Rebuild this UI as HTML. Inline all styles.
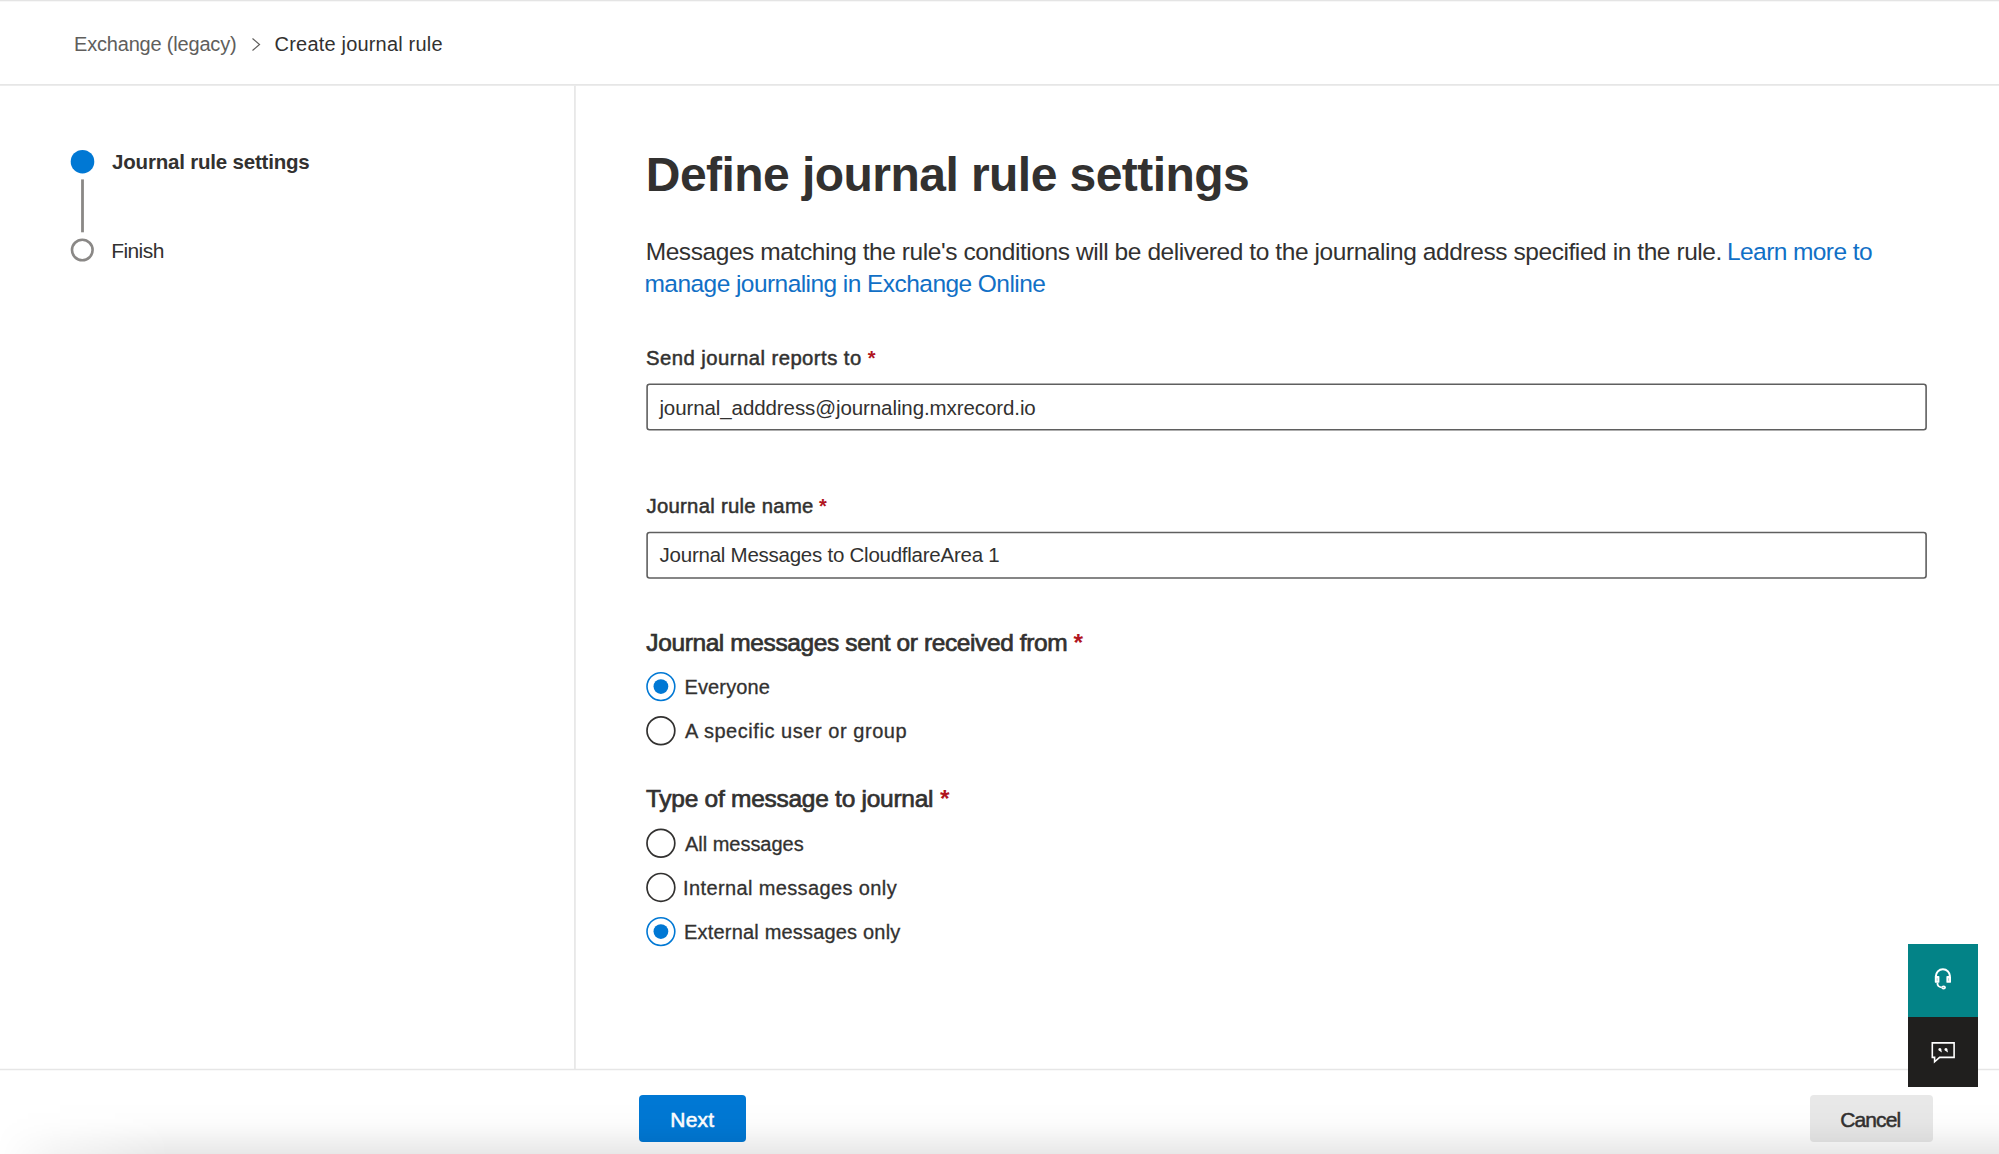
<!DOCTYPE html>
<html><head><meta charset="utf-8"><title>Create journal rule</title><style>
html,body{margin:0;padding:0;width:1999px;height:1154px;overflow:hidden;background:#fff;position:relative;font-family:"Liberation Sans",sans-serif}
.t{position:absolute;white-space:pre;line-height:1}
</style></head><body>
<svg style="position:absolute;left:0;top:0" width="1999" height="1154" viewBox="0 0 1999 1154">
<rect x="0" y="0" width="1999" height="1.3" fill="#e4e4e4"/>
<line x1="0" y1="84.8" x2="1999" y2="84.8" stroke="#e6e6e6" stroke-width="1.7"/>
<line x1="574.9" y1="85.6" x2="574.9" y2="1069" stroke="#e8e8e8" stroke-width="1.8"/>
<line x1="0" y1="1069.5" x2="1999" y2="1069.5" stroke="#e6e6e6" stroke-width="1.6"/>
<circle cx="82.5" cy="161.7" r="11.8" fill="#0078d4"/>
<rect x="81.1" y="179.4" width="2.8" height="52.9" fill="#8a8886"/>
<circle cx="82.3" cy="250" r="10.3" fill="none" stroke="#8a8886" stroke-width="2.6"/>
</svg>
<svg style="position:absolute;left:0;top:0" width="1999" height="1154" viewBox="0 0 1999 1154">
<rect x="647.1" y="384.3" width="1279" height="45.5" rx="2.5" fill="none" stroke="#5f5f5f" stroke-width="1.6"/>
<rect x="647.1" y="532.5" width="1279" height="45.5" rx="2.5" fill="none" stroke="#5f5f5f" stroke-width="1.6"/>
<circle cx="660.9" cy="686.6" r="13.9" fill="none" stroke="#0078d4" stroke-width="1.6"/><circle cx="660.9" cy="686.6" r="7.4" fill="#0078d4"/><circle cx="660.9" cy="730.8" r="13.9" fill="none" stroke="#323130" stroke-width="1.7"/><circle cx="660.9" cy="843.2" r="13.9" fill="none" stroke="#323130" stroke-width="1.7"/><circle cx="660.9" cy="887.4" r="13.9" fill="none" stroke="#323130" stroke-width="1.7"/><circle cx="660.9" cy="931.6" r="13.9" fill="none" stroke="#0078d4" stroke-width="1.6"/><circle cx="660.9" cy="931.6" r="7.4" fill="#0078d4"/>
<path d="M252.5 38.5 L259.5 44.5 L252.5 50.5" fill="none" stroke="#605e5c" stroke-width="1.2"/>
</svg>
<div style="position:absolute;left:638.7px;top:1095.2px;width:107px;height:46.6px;border-radius:4px;background:#0078d4"></div>
<div style="position:absolute;left:1809.6px;top:1095px;width:123px;height:46.8px;border-radius:4px;background:#e8e8e8"></div>
<div style="position:absolute;left:1907.6px;top:943.6px;width:70.8px;height:73.2px;background:#038387"></div>
<div style="position:absolute;left:1907.6px;top:1016.8px;width:70.8px;height:70.6px;background:#201f1e"></div>
<svg style="position:absolute;left:1928px;top:962px" width="30" height="32" viewBox="0 0 30 32"><path d="M7.8 14.6 A7.1 7.4 0 0 1 22 14.6" fill="none" stroke="#fff" stroke-width="2.1"/><rect x="6.8" y="13.9" width="4.6" height="6.9" rx="0.9" fill="#fff"/><rect x="18.4" y="13.9" width="4.6" height="6.9" rx="0.9" fill="#fff"/><rect x="8.7" y="16.2" width="0.9" height="2.6" fill="#9ccbcc"/><rect x="20.2" y="16.2" width="0.9" height="2.6" fill="#9ccbcc"/><path d="M9.4 20.6 Q9.2 24.9 13.6 25.3" fill="none" stroke="#fff" stroke-width="1.8"/><ellipse cx="15.6" cy="25.4" rx="2.3" ry="2" fill="#fff"/><ellipse cx="15.4" cy="25.5" rx="1" ry="0.55" fill="#8cc2c4"/></svg>
<svg style="position:absolute;left:1926px;top:1036px" width="34" height="32" viewBox="0 0 34 32"><path d="M13.6 21.4 H28.1 V6.9 H6.3 V21.4 H8.6 V25.8 Z" fill="none" stroke="#fff" stroke-width="1.6" stroke-linejoin="miter"/><path d="M12.3 13.6 a1.55 1.55 0 1 1 3.1 0 v0.6 l0.5 2.2 l-2.3 -1.5 a1.6 1.6 0 0 1 -1.3 -1.3 z" fill="#fff"/><path d="M18.4 13.6 a1.55 1.55 0 1 1 3.1 0 v0.6 l0.5 2.2 l-2.3 -1.5 a1.6 1.6 0 0 1 -1.3 -1.3 z" fill="#fff"/></svg>

<div class="t" style="left:74.0px;top:34.1px;font-size:20px;font-weight:400;letter-spacing:-0.188px;color:#605e5c;">Exchange (legacy)</div><div class="t" style="left:274.6px;top:34.1px;font-size:20px;font-weight:400;letter-spacing:0.189px;color:#323130;">Create journal rule</div><div class="t" style="left:112.1px;top:151.6px;font-size:20.5px;font-weight:700;letter-spacing:-0.2px;color:#323130;">Journal rule settings</div><div class="t" style="left:111.2px;top:240.0px;font-size:21px;font-weight:400;letter-spacing:-0.58px;color:#323130;">Finish</div><div class="t" style="left:645.8px;top:151.2px;font-size:48px;font-weight:700;letter-spacing:-0.548px;color:#323130;">Define journal rule settings</div><div class="t" style="left:645.7px;top:240.1px;font-size:24.5px;font-weight:400;letter-spacing:-0.426px;color:#323130;">Messages matching the rule's conditions will be delivered to the journaling address specified in the rule.</div><div class="t" style="left:1727.0px;top:240.1px;font-size:24.5px;font-weight:400;letter-spacing:-0.583px;color:#1170c6;">Learn more to</div><div class="t" style="left:644.5px;top:271.9px;font-size:24.5px;font-weight:400;letter-spacing:-0.557px;color:#1170c6;">manage journaling in Exchange Online</div><div class="t" style="left:646.0px;top:347.5px;font-size:20.3px;font-weight:400;letter-spacing:0.455px;color:#323130;-webkit-text-stroke:0.5px #323130;">Send journal reports to</div><div class="t" style="left:659.4px;top:397.8px;font-size:20.5px;font-weight:400;letter-spacing:-0.089px;color:#323130;">journal_adddress@journaling.mxrecord.io</div><div class="t" style="left:646.5px;top:495.8px;font-size:20.3px;font-weight:400;letter-spacing:0.281px;color:#323130;-webkit-text-stroke:0.5px #323130;">Journal rule name</div><div class="t" style="left:659.6px;top:545.2px;font-size:20.5px;font-weight:400;letter-spacing:-0.246px;color:#323130;">Journal Messages to CloudflareArea 1</div><div class="t" style="left:646.3px;top:630.8px;font-size:24.5px;font-weight:400;letter-spacing:-0.389px;color:#323130;-webkit-text-stroke:0.7px #323130;">Journal messages sent or received from</div><div class="t" style="left:684.5px;top:676.7px;font-size:20px;font-weight:400;letter-spacing:0.129px;color:#323130;-webkit-text-stroke:0.3px #323130;">Everyone</div><div class="t" style="left:685.0px;top:720.7px;font-size:20px;font-weight:400;letter-spacing:0.548px;color:#323130;-webkit-text-stroke:0.3px #323130;">A specific user or group</div><div class="t" style="left:646.0px;top:787.3px;font-size:24.5px;font-weight:400;letter-spacing:-0.268px;color:#323130;-webkit-text-stroke:0.7px #323130;">Type of message to journal</div><div class="t" style="left:685.0px;top:833.8px;font-size:20px;font-weight:400;letter-spacing:-0.027px;color:#323130;-webkit-text-stroke:0.3px #323130;">All messages</div><div class="t" style="left:683.0px;top:878.1px;font-size:20px;font-weight:400;letter-spacing:0.381px;color:#323130;-webkit-text-stroke:0.3px #323130;">Internal messages only</div><div class="t" style="left:684.0px;top:922.1px;font-size:20px;font-weight:400;letter-spacing:0.19px;color:#323130;-webkit-text-stroke:0.3px #323130;">External messages only</div><div class="t" style="left:670.3px;top:1109.2px;font-size:21px;font-weight:400;letter-spacing:0.233px;color:#ffffff;-webkit-text-stroke:0.55px #ffffff;">Next</div><div class="t" style="left:1840.3px;top:1108.9px;font-size:21px;font-weight:400;letter-spacing:-0.92px;color:#323130;-webkit-text-stroke:0.5px #323130;">Cancel</div>
<div class="t" style="left:867.8px;top:347.8px;font-size:20px;font-weight:700;color:#b1151f">*</div><div class="t" style="left:819.0px;top:496.1px;font-size:20px;font-weight:700;color:#b1151f">*</div><div class="t" style="left:1073.4px;top:630.8px;font-size:24.5px;font-weight:700;color:#b1151f">*</div><div class="t" style="left:940.0px;top:787.3px;font-size:24.5px;font-weight:700;color:#b1151f">*</div>
<div style="position:absolute;left:0;top:1100px;width:1999px;height:54px;background:linear-gradient(to bottom,rgba(0,0,0,0) 0px,rgba(0,0,0,0.003) 10px,rgba(0,0,0,0.013) 22px,rgba(0,0,0,0.032) 32px,rgba(0,0,0,0.058) 42px,rgba(0,0,0,0.09) 54px);-webkit-mask-image:linear-gradient(to right,rgba(0,0,0,0.03) 0px,rgba(0,0,0,0.5) 60px,#000 170px)"></div>
</body></html>
